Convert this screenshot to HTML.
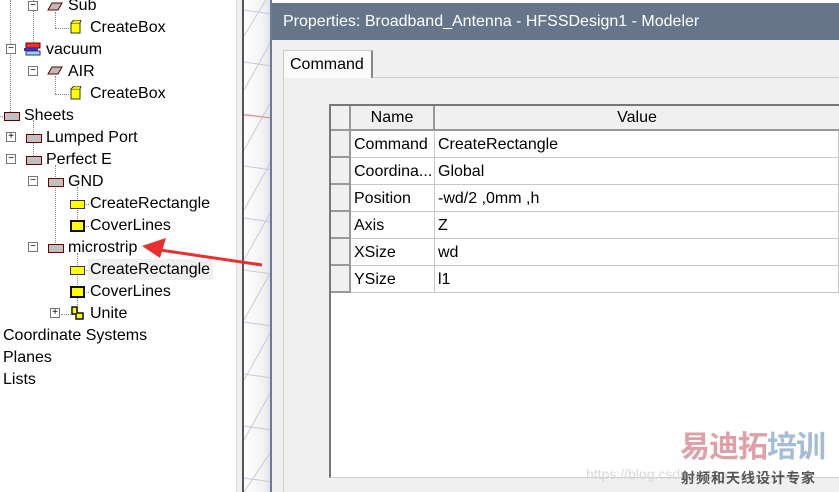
<!DOCTYPE html>
<html><head><meta charset="utf-8"><style>
*{margin:0;padding:0;box-sizing:border-box}
body{width:839px;height:492px;overflow:hidden;background:#fff;font-family:"Liberation Sans","Noto Sans CJK SC",sans-serif;font-size:16px;color:#000;position:relative}
.t{position:absolute;white-space:nowrap;line-height:20px}
.a{position:absolute}
.box{position:absolute;width:10px;height:10px;border:1px solid #777;background:#fff;font-size:10px;line-height:8px;text-align:center;color:#000}
.dv{position:absolute;border-left:1px dotted #888}
.dh{position:absolute;border-top:1px dotted #888}
.sh{position:absolute;width:16px;height:9px;background:#c0c0c0;border:1px solid #600}
.yr{position:absolute;width:15px;height:9px;background:#ff0;border:1px solid #333}
.yc{position:absolute;width:15px;height:12px;background:#ff0;border:2px solid #111}
.cell{position:absolute;border-right:1px solid #c8c8c8;border-bottom:1px solid #c8c8c8;height:27px;line-height:27px;padding-left:3px;white-space:nowrap;overflow:hidden}
</style></head><body>
<div class="dv" style="left:10px;top:0;height:112px"></div>
<div class="dv" style="left:33px;top:0;height:48px"></div>
<div class="dv" style="left:55px;top:12px;height:16px"></div>
<div class="dh" style="left:55px;top:28px;width:14px"></div>
<div class="dv" style="left:33px;top:120px;height:40px"></div>
<div class="dv" style="left:55px;top:165px;height:82px"></div>
<div class="dv" style="left:77px;top:187px;height:38px"></div>
<div class="dh" style="left:77px;top:204px;width:12px"></div>
<div class="dh" style="left:77px;top:226px;width:12px"></div>
<div class="dv" style="left:55px;top:76px;height:18px"></div>
<div class="dh" style="left:55px;top:94px;width:14px"></div>
<div class="dv" style="left:77px;top:253px;height:60px"></div>
<div class="dh" style="left:77px;top:270px;width:12px"></div>
<div class="dh" style="left:77px;top:292px;width:12px"></div>
<div class="dh" style="left:61px;top:314px;width:12px"></div>
<div class="dh" style="left:0;top:116px;width:5px"></div>
<div class="box" style="left:28px;top:1px">−</div>
<div class="box" style="left:6px;top:44px">−</div>
<div class="box" style="left:28px;top:66px">−</div>
<div class="box" style="left:6px;top:132px">+</div>
<div class="box" style="left:6px;top:154px">−</div>
<div class="box" style="left:28px;top:176px">−</div>
<div class="box" style="left:28px;top:242px">−</div>
<div class="box" style="left:50px;top:308px">+</div>
<svg class="a" style="left:47px;top:0" width="16" height="11"><path d="M1 10 L5 3 L15 3 L11 10 Z" fill="#bbb" stroke="#600"/></svg>
<svg class="a" style="left:47px;top:64px" width="16" height="11"><path d="M1 10 L5 3 L15 3 L11 10 Z" fill="#bbb" stroke="#600"/></svg>
<svg class="a" style="left:70px;top:20px" width="12" height="14"><rect x="1" y="3" width="9" height="10" fill="#ff0" stroke="#333"/><path d="M1 3 L4 0 L11 0 L10 3" fill="#ee0" stroke="#333"/></svg>
<svg class="a" style="left:70px;top:86px" width="12" height="14"><rect x="1" y="3" width="9" height="10" fill="#ff0" stroke="#333"/><path d="M1 3 L4 0 L11 0 L10 3" fill="#ee0" stroke="#333"/></svg>
<svg class="a" style="left:24px;top:42px" width="18" height="14"><rect x="2" y="1" width="14" height="5" fill="#e33" stroke="#600"/><rect x="0" y="6" width="14" height="3" fill="#33c"/><rect x="2" y="9" width="14" height="4" fill="#9cf" stroke="#336"/></svg>
<div class="sh" style="left:4px;top:112px"></div>
<div class="sh" style="left:26px;top:134px"></div>
<div class="sh" style="left:26px;top:156px"></div>
<div class="sh" style="left:48px;top:178px"></div>
<div class="sh" style="left:48px;top:244px"></div>
<div class="yr" style="left:70px;top:200px"></div>
<div class="yc" style="left:70px;top:220px"></div>
<div class="yr" style="left:70px;top:266px"></div>
<div class="yc" style="left:70px;top:286px"></div>
<svg class="a" style="left:71px;top:306px" width="14" height="15"><path d="M1 1 H6 V7 H12 V13 H5 V8 H1 Z" fill="#ff0" stroke="#111" stroke-width="1.5"/></svg>
<div class="a" style="left:88px;top:259px;width:125px;height:21px;background:#efefef"></div>
<div class="t" style="left:68px;top:-4px">Sub</div>
<div class="t" style="left:90px;top:18px">CreateBox</div>
<div class="t" style="left:46px;top:40px">vacuum</div>
<div class="t" style="left:68px;top:62px">AIR</div>
<div class="t" style="left:90px;top:84px">CreateBox</div>
<div class="t" style="left:24px;top:106px">Sheets</div>
<div class="t" style="left:46px;top:128px">Lumped Port</div>
<div class="t" style="left:46px;top:150px">Perfect E</div>
<div class="t" style="left:68px;top:172px">GND</div>
<div class="t" style="left:90px;top:194px">CreateRectangle</div>
<div class="t" style="left:90px;top:216px">CoverLines</div>
<div class="t" style="left:68px;top:238px">microstrip</div>
<div class="t" style="left:90px;top:260px">CreateRectangle</div>
<div class="t" style="left:90px;top:282px">CoverLines</div>
<div class="t" style="left:90px;top:304px">Unite</div>
<div class="t" style="left:3px;top:326px">Coordinate Systems</div>
<div class="t" style="left:3px;top:348px">Planes</div>
<div class="t" style="left:3px;top:370px">Lists</div>
<div class="a" style="left:236px;top:0;width:6px;height:492px;background:#f0f0f0;border-left:1px solid #ddd"></div>
<div class="a" style="left:242px;top:0;width:30px;height:492px;background:linear-gradient(90deg,#fff,#f2f2f5 70%,#dcdce4);border-left:2px solid #555"></div>
<svg class="a" style="left:244px;top:0" width="28" height="492">
<g stroke="#c8c8d8" stroke-width="1">
<path d="M0 10 L28 14 M0 62 L28 66 M0 114 L28 118 M0 166 L28 170 M0 218 L28 222 M0 270 L28 274 M0 322 L28 326 M0 374 L28 378 M0 426 L28 430 M0 478 L28 482"/>
<path d="M0 36 L28 -10 M0 90 L28 40 M0 150 L28 100 M0 210 L28 160 M0 260 L28 210 M0 320 L28 270 M0 380 L28 330 M0 440 L28 390 M0 492 L28 450"/>
</g><path d="M0 115 L28 118" stroke="#e88"/></svg>
<div class="a" style="left:270px;top:0;width:2px;height:492px;background:#6a7a98"></div>
<div class="a" style="left:272px;top:3px;width:567px;height:489px;background:#f0f0f0"></div>
<div class="a" style="left:272px;top:3px;width:567px;height:37px;background:#667589;color:#fff;font-size:16px;line-height:37px;padding-left:11px;white-space:nowrap">Properties: Broadband_Antenna - HFSSDesign1 - Modeler</div>
<div class="a" style="left:283px;top:77px;width:556px;height:415px;border-left:1px solid #d0d0d0;border-top:1px solid #d0d0d0"></div>
<div class="a" style="left:283px;top:50px;width:90px;height:28px;background:#fafafa;border:1px solid #c8c8c8;border-bottom:none;border-right:2px solid #888;padding-left:6px;line-height:27px">Command</div>
<div class="a" style="left:329px;top:104px;width:510px;height:374px;background:#fff;border-left:2px solid #777;border-top:2px solid #777;border-bottom:1px solid #ccc"></div>
<div class="a" style="left:331px;top:106px;width:20px;height:25px;background:#f0f0f0;border-right:2px solid #999;border-bottom:2px solid #999"></div>
<div class="a" style="left:351px;top:106px;width:84px;height:25px;background:#f0f0f0;border-right:2px solid #999;border-bottom:2px solid #999;text-align:center;line-height:24px">Name</div>
<div class="a" style="left:435px;top:106px;width:404px;height:25px;background:#f0f0f0;border-bottom:2px solid #999;text-align:center;line-height:24px">Value</div>
<div class="a" style="left:331px;top:131px;width:20px;height:162px;background:repeating-linear-gradient(#f0f0f0 0,#f0f0f0 25px,#999 25px,#999 27px);border-right:2px solid #999"></div>
<div class="cell" style="left:351px;top:131px;width:84px">Command</div><div class="cell" style="left:435px;top:131px;width:404px">CreateRectangle</div>
<div class="cell" style="left:351px;top:158px;width:84px">Coordina...</div><div class="cell" style="left:435px;top:158px;width:404px">Global</div>
<div class="cell" style="left:351px;top:185px;width:84px">Position</div><div class="cell" style="left:435px;top:185px;width:404px">-wd/2 ,0mm ,h</div>
<div class="cell" style="left:351px;top:212px;width:84px">Axis</div><div class="cell" style="left:435px;top:212px;width:404px">Z</div>
<div class="cell" style="left:351px;top:239px;width:84px">XSize</div><div class="cell" style="left:435px;top:239px;width:404px">wd</div>
<div class="cell" style="left:351px;top:266px;width:84px">YSize</div><div class="cell" style="left:435px;top:266px;width:404px">l1</div>
<div class="t" style="left:586px;top:464px;color:#d8d8d8;font-size:14px">https://blog.csdn.net/xx</div>
<div class="t" style="left:680px;top:430px;font-size:30px;line-height:36px;font-weight:bold;letter-spacing:-1px"><span style="color:#e0a0a8">易迪拓</span><span style="color:#a4bcd8">培训</span></div>
<div class="t" style="left:681px;top:468px;font-size:14px;color:#555;font-weight:bold;letter-spacing:1px">射频和天线设计专家</div>
<svg class="a" style="left:0;top:0" width="300" height="300"><path d="M262 265 L160 250" stroke="#e83030" stroke-width="3"/><path d="M142 246 L166 238 L160 258 Z" fill="#e83030"/></svg>
</body></html>
